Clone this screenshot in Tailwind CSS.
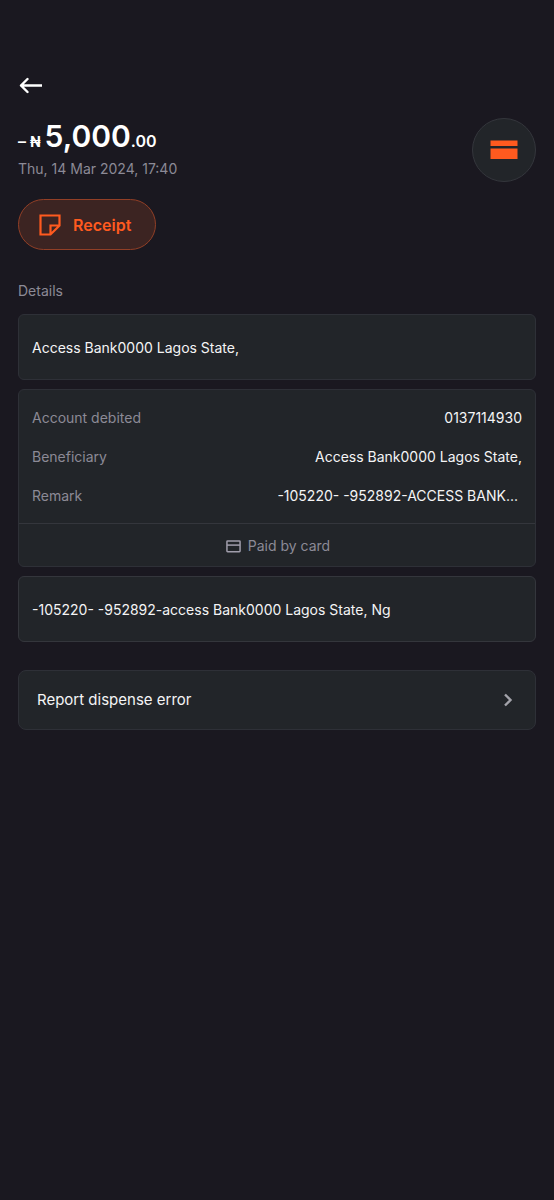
<!DOCTYPE html>
<html lang="en">
<head>
<meta charset="utf-8">
<meta name="viewport" content="width=device-width, initial-scale=1">
<title>Transaction details</title>
<script src="https://cdn.jsdelivr.net/npm/@tailwindcss/browser@4"></script>
</head>
<body class="min-h-screen bg-[#1a1820] font-['Inter',sans-serif] text-sm text-[#f4f4f5]">
<main class="flex flex-col px-[18px] pt-[73px] pb-6">
  <button type="button" aria-label="Back" class="flex h-6 w-6 items-center text-white">
    <svg class="h-6 w-6" viewBox="0 0 24 24" fill="none" stroke="currentColor" stroke-width="2.4" stroke-linecap="round" stroke-linejoin="round"><path d="M23.5 12.5H3M9.5 6 3 12.5 9.5 19"/></svg>
  </button>

  <header class="mt-5 flex items-start justify-between">
    <div>
      <h1 class="flex items-baseline font-semibold leading-[38px] text-white"><span class="text-base">–</span><span class="ml-1 text-sm font-bold">₦</span><span class="ml-1 text-[30px]">5,000</span><span class="text-base">.00</span></h1>
      <p class="mt-1 leading-5 text-[#8c8a96]">Thu, 14 Mar 2024, 17:40</p>
    </div>
    <div class="mt-[1px] flex h-16 w-16 items-center justify-center rounded-full border border-[#34363c] bg-[#222529]">
      <svg class="h-5 w-7" viewBox="0 0 28 20" fill="#ff5a1f"><path d="M.5 .5h27V6H.5zM.5 8.5h27V19H.5z"/></svg>
    </div>
  </header>

  <button type="button" class="mt-[17px] flex h-[51px] w-[138px] items-center gap-3 self-start rounded-full border border-[#923f26] bg-[#3c2422] pl-5 text-base font-semibold text-[#ff5a1f]">
    <svg class="h-[22px] w-[22px]" viewBox="0 0 22 22" fill="none" stroke="currentColor" stroke-width="2.2"><path d="M1.5 1.5h19v10l-9 9h-10zM11.5 20.5v-9h9"/></svg>
    Receipt
  </button>

  <h2 class="mt-[31px] leading-5 text-[#8c8a96]">Details</h2>

  <section class="mt-[13px] flex flex-col gap-[9px]">
    <p class="rounded-md border border-[#2e3037] bg-[#222529] px-[13px] pt-[23px] pb-[21px] leading-5">Access Bank0000 Lagos State,</p>

    <div class="rounded-md border border-[#2e3037] bg-[#222529]">
      <dl class="flex flex-col gap-[19px] px-[13px] pt-[18px] pb-[17px] leading-5">
        <div class="flex justify-between gap-4"><dt class="text-[#8c8a96]">Account debited</dt><dd>0137114930</dd></div>
        <div class="flex justify-between gap-4"><dt class="text-[#8c8a96]">Beneficiary</dt><dd>Access Bank0000 Lagos State,</dd></div>
        <div class="flex justify-between gap-4"><dt class="text-[#8c8a96]">Remark</dt><dd class="pr-1">-105220- -952892-ACCESS BANK...</dd></div>
      </dl>
      <div class="flex h-[43px] items-center justify-center gap-[7px] border-t border-[#34363c] pt-[2px] pl-[2px] text-[#8c8a96]">
        <svg class="h-[15px] w-[15px]" viewBox="0 0 16 16" fill="none" stroke="#a09dab" stroke-width="1.6"><rect x="1" y="2" width="14" height="11.5" rx=".7"/><path d="M1 6.5h14"/></svg>
        Paid by card
      </div>
    </div>

    <p class="rounded-md border border-[#34363c] bg-[#222529] px-[13px] pt-[23px] pb-[21px] leading-5">-105220- -952892-access Bank0000 Lagos State, Ng</p>
  </section>

  <button type="button" class="mt-7 flex h-[60px] w-full items-center justify-between rounded-lg border border-[#2e3037] bg-[#222529] px-[18px] text-[15px]">
    Report dispense error
    <svg class="h-[18px] w-[18px]" viewBox="0 0 18 18" fill="none" stroke="#a3a3aa" stroke-width="2.4"><path d="m6 3.5 5.5 5.5L6 14.5"/></svg>
  </button>
</main>
</body>
</html>
